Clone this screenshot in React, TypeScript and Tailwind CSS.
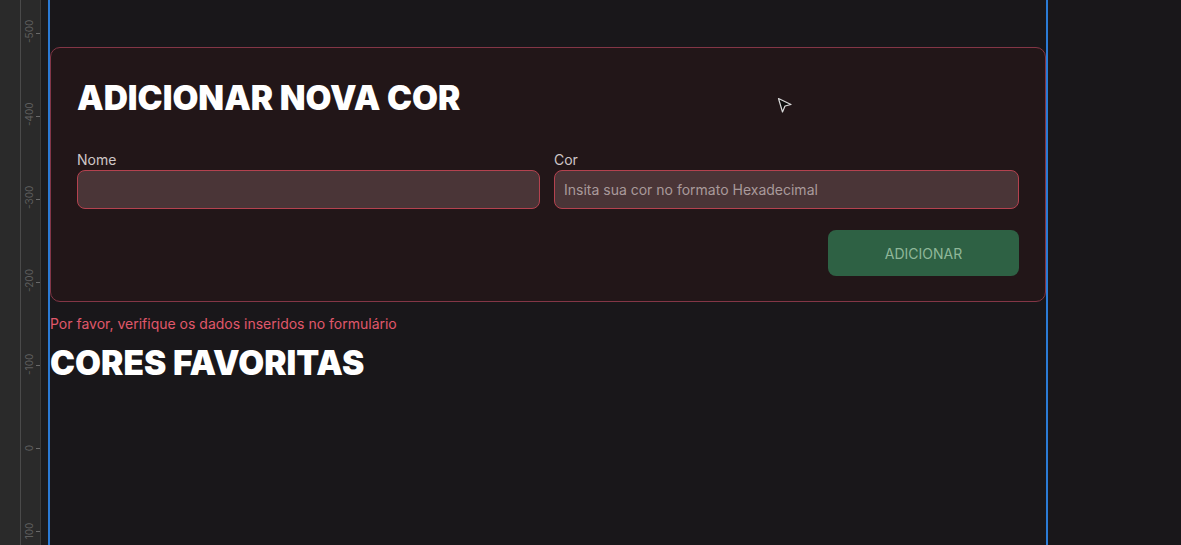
import { useState } from 'react';

const rulerMarks = [
  { label: '-500', top: 33 },
  { label: '-400', top: 116 },
  { label: '-300', top: 199 },
  { label: '-200', top: 282 },
  { label: '-100', top: 365 },
  { label: '0', top: 448 },
  { label: '100', top: 531 },
];

function Ruler() {
  return (
    <div className="flex h-full shrink-0">
      <div className="w-[21px] h-full bg-[#2a2a2a] border-r border-[#4a4a4a]" />
      <div className="relative w-[20px] h-full bg-[#2a2a2a] border-r border-[#3c3c3c]">
        {rulerMarks.map((m) => (
          <div key={m.label}>
            <span
              className="absolute left-[-2px] w-[20px] text-[10px] leading-[10px] text-[#5e5e5e] text-center -rotate-90 whitespace-nowrap"
              style={{ top: m.top - 5 }}
            >
              {m.label}
            </span>
            <span className="absolute right-0 w-[4px] h-px bg-[#6a6a6a]" style={{ top: m.top }} />
          </div>
        ))}
      </div>
      <div className="w-[7px] h-full bg-[#1c1b1d]" />
    </div>
  );
}

function Cursor() {
  return (
    <svg className="absolute left-[777px] top-[97px]" width="16" height="17" viewBox="0 0 16 17">
      <path d="M1.5 1.5 L14 7.5 L8 9 L5.5 15 Z" fill="#0b0b0b" stroke="#d8d8d8" strokeWidth="1.2" strokeLinejoin="round" />
    </svg>
  );
}

export default function App() {
  const [nome, setNome] = useState('');
  const [cor, setCor] = useState('');

  return (
    <div
      className="relative flex h-[545px] w-full overflow-hidden bg-[#19171a]"
      style={{ fontFamily: 'Inter, "Noto Sans", sans-serif' }}
    >
      <Ruler />

      {/* canvas frame */}
      <div className="w-[1000px] h-full shrink-0 border-x-2 border-[#2b7bd6] bg-[#19171a]">
        <div className="pt-[47px]">
          <form
            className="rounded-[10px] border border-[#833646] bg-[#221618] px-[26px] pt-[30px] pb-[25px]"
            onSubmit={(e) => e.preventDefault()}
          >
            <h2 className="text-[33.5px] leading-[40px] font-black text-white">
              ADICIONAR NOVA COR
            </h2>

            <div className="mt-[32px] grid grid-cols-[463px_1fr] gap-[14px]">
              <label className="flex flex-col">
                <span className="text-[14px] leading-[20px] text-[#cfc6c7]">Nome</span>
                <input
                  value={nome}
                  onChange={(e) => setNome(e.target.value)}
                  className="h-[39px] rounded-[8px] border border-[#b4424f] bg-[#4a3537] px-[10px] text-[14px] text-white outline-none"
                />
              </label>
              <label className="flex flex-col">
                <span className="text-[14px] leading-[20px] text-[#cfc6c7]">Cor</span>
                <input
                  value={cor}
                  onChange={(e) => setCor(e.target.value)}
                  placeholder="Insita sua cor no formato Hexadecimal"
                  className="h-[39px] rounded-[8px] border border-[#b4424f] bg-[#4a3537] px-[9px] text-[14px] text-white placeholder:text-[#a99a9b] outline-none"
                />
              </label>
            </div>

            <div className="mt-[21px] flex justify-end">
              <button
                type="submit"
                className="h-[46px] w-[191px] rounded-[8px] bg-[#2e6144] text-[14px] text-[#8fb799]"
              >
                ADICIONAR
              </button>
            </div>
          </form>

          <p className="mt-[12px] text-[14px] leading-[20px] text-[#e0576b]">
            Por favor, verifique os dados inseridos no formulário
          </p>

          <h2 className="mt-[9px] text-[33.5px] leading-[40px] font-black text-white">
            CORES FAVORITAS
          </h2>
        </div>
      </div>

      <div className="flex-1 h-full bg-[#19171a]" />

      <Cursor />
    </div>
  );
}
